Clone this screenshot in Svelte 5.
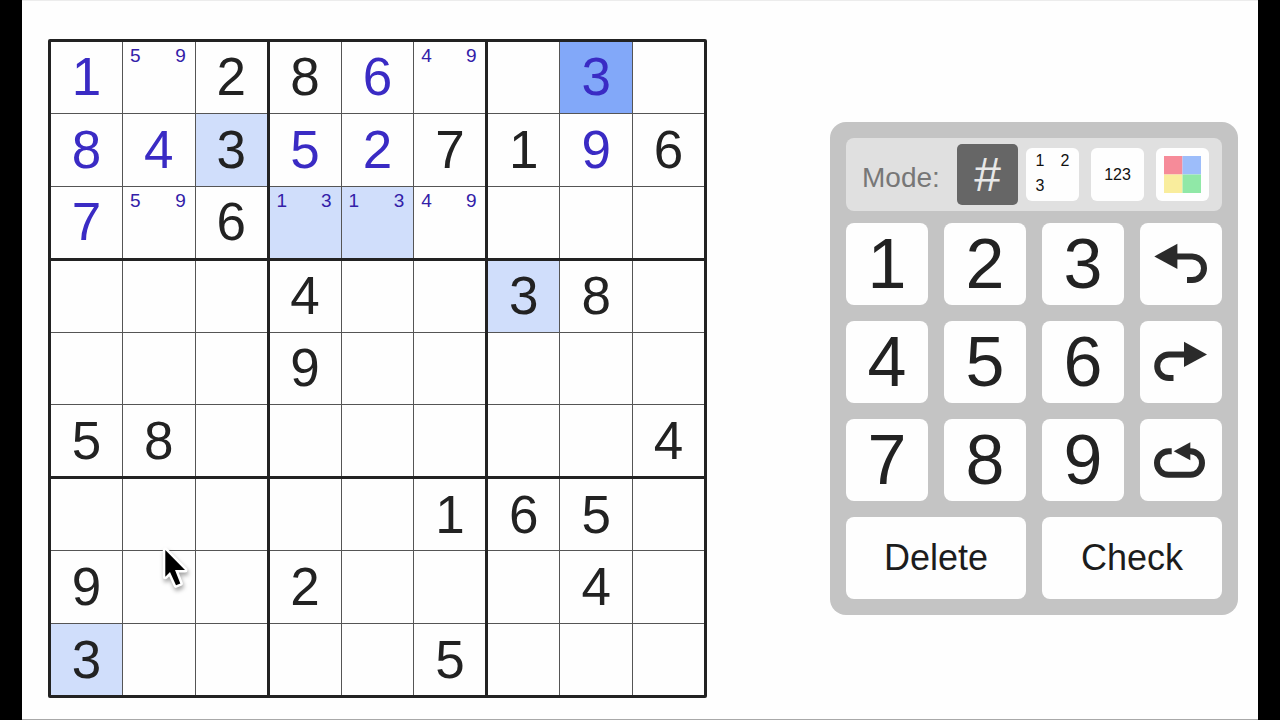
<script>
  // One string per row; "." marks an empty cell.
  const given = [
    '..28.....',
    '..3..71.6',
    '..6......',
    '...4..38.',
    '...9.....',
    '58......4',
    '.....165.',
    '9..2...4.',
    '3....5...'
  ];
  const entered = [
    '1...6..3.',
    '84.52..9.',
    '7........',
    '.........',
    '.........',
    '.........',
    '.........',
    '.........',
    '.........'
  ];
  const notes = {
    '0-1': [5, 9], '0-5': [4, 9],
    '2-1': [5, 9], '2-3': [1, 3], '2-4': [1, 3], '2-5': [4, 9]
  };
  const matching = ['1-2', '2-3', '2-4', '3-6', '8-0'];

  let selected = $state('0-7');
  let mode = $state('digit');

  // Cells grouped by 3x3 box so the heavy rules fall in the gaps between boxes.
  const boxes = Array.from({ length: 9 }, (_, b) =>
    Array.from({ length: 9 }, (_, i) => {
      const row = Math.floor(b / 3) * 3 + Math.floor(i / 3);
      const col = (b % 3) * 3 + (i % 3);
      const key = `${row}-${col}`;
      const g = given[row][col];
      const e = entered[row][col];
      return {
        key,
        value: g !== '.' ? g : e !== '.' ? e : '',
        mine: e !== '.',
        notes: notes[key] ?? [],
        match: matching.includes(key)
      };
    })
  );
</script>

<main>
  <section class="board" aria-label="Sudoku grid">
    {#each boxes as box}
      <div class="box">
        {#each box as cell (cell.key)}
          <button
            class="cell"
            class:mine={cell.mine}
            class:match={cell.match}
            class:selected={selected === cell.key}
            onclick={() => (selected = cell.key)}
          >
            {#if cell.notes.length}
              <span class="notes"><span>{cell.notes[0]}</span><span></span><span>{cell.notes[1]}</span></span>
            {:else}
              {cell.value}
            {/if}
          </button>
        {/each}
      </div>
    {/each}
  </section>

  <section class="panel" aria-label="Controls">
    <div class="modes">
      <span class="label">Mode:</span>
      <button class="mode hash" class:active={mode === 'digit'} onclick={() => (mode = 'digit')}>#</button>
      <button class="mode corner" class:active={mode === 'corner'} onclick={() => (mode = 'corner')}>
        <span>1</span><span>2</span><span>3</span>
      </button>
      <button class="mode" class:active={mode === 'centre'} onclick={() => (mode = 'centre')}>123</button>
      <button class="mode" class:active={mode === 'colour'} onclick={() => (mode = 'colour')} aria-label="Colour">
        <svg width="37" height="37" viewBox="0 0 37 37">
          <path fill="#f68b99" d="M0 0h18.5v18.5H0z" />
          <path fill="#9dbdfa" d="M18.5 0H37v18.5H18.5z" />
          <path fill="#f9ed9d" d="M0 18.5h18.5V37H0z" />
          <path fill="#90e8a7" d="M18.5 18.5H37V37H18.5z" />
        </svg>
      </button>
    </div>

    <div class="keys">
      <button class="key">1</button>
      <button class="key">2</button>
      <button class="key">3</button>
      <button class="key" aria-label="Undo">
        <svg class="icon" viewBox="0 0 82 82">
          <path class="line" d="M36 33.4H52.2a11.8 11.8 0 0 1 0 23.6H47" />
          <path class="head" d="M14.3 33.4L37.4 20.8V46z" />
        </svg>
      </button>
      <button class="key">4</button>
      <button class="key">5</button>
      <button class="key">6</button>
      <button class="key" aria-label="Redo">
        <svg class="icon" viewBox="0 0 82 82">
          <path class="line" d="M46 33.4H29a11.8 11.8 0 0 0 0 23.6H33.5" />
          <path class="head" d="M67 33.4L44 20.8V46z" />
        </svg>
      </button>
      <button class="key">7</button>
      <button class="key">8</button>
      <button class="key">9</button>
      <button class="key" aria-label="Restart">
        <svg class="icon" viewBox="0 0 82 82">
          <path class="line" d="M31.7 32.3H28.7a11.7 11.7 0 0 0 0 23.4H50.3a11.7 11.7 0 0 0 0-23.4H48" />
          <path class="head" d="M33.7 32.3L50.3 23.3V41.3z" />
        </svg>
      </button>
      <button class="key wide">Delete</button>
      <button class="key wide">Check</button>
    </div>
  </section>

  <svg class="pointer" width="32" height="48" viewBox="0 0 32 48" aria-hidden="true">
    <path
      d="M5.3 8V34.7L10 29.9L16 43.3L20.3 41.5L15 28H25z"
      fill="#000"
      stroke="#fff"
      stroke-width="5"
      stroke-linejoin="round"
      paint-order="stroke"
    />
  </svg>
</main>

<style>
  :global(body) {
    background: #000;
  }
  main {
    position: relative;
    box-sizing: border-box;
    min-height: 100vh;
    margin: 0 22px;
    padding: 38px 20px 20px 26px;
    border-top: 1px solid #ececec;
    border-bottom: 1px solid #a8a8a8;
    background: #fefefe;
    display: grid;
    grid-template-columns: 659fr 408fr;
    column-gap: 123px;
    align-items: center;
    align-content: start;
    font-family: "Liberation Sans", Arial, sans-serif;
    color: #222;
  }
  button {
    border: 0;
    margin: 0;
    padding: 0;
    font: inherit;
    color: inherit;
    background: #fefefe;
    cursor: pointer;
  }
  .board {
    box-sizing: border-box;
    aspect-ratio: 1;
    padding: 3px;
    border-radius: 2px;
    background: #222;
    display: grid;
    grid-template-columns: repeat(3, minmax(0, 1fr));
    grid-template-rows: repeat(3, minmax(0, 1fr));
    gap: 3px;
  }
  .box {
    background: #555;
    display: grid;
    grid-template-columns: minmax(0, 71fr) minmax(0, 72fr) minmax(0, 71fr);
    grid-template-rows: minmax(0, 71fr) minmax(0, 72fr) minmax(0, 71fr);
    gap: 1px;
  }
  .cell {
    display: flex;
    align-items: center;
    justify-content: center;
    font-size: 53px;
    line-height: 52px;
  }
  .mine {
    color: #3a2bc4;
  }
  .match {
    background: #d0defb;
  }
  .selected {
    background: #82a8f9;
  }
  .notes {
    flex: 1;
    align-self: flex-start;
    display: grid;
    grid-template-columns: repeat(3, 1fr);
    padding: 2px 3px 0 1px;
    font-size: 19px;
    line-height: 24px;
    text-align: center;
    color: #3320a8;
  }
  .panel {
    padding: 16px;
    border-radius: 16px;
    background: #c4c4c4;
    display: grid;
    gap: 12px;
  }
  .modes {
    display: flex;
    align-items: center;
    gap: 12px;
    height: 73px;
    padding: 0 13px 0 16px;
    border-radius: 8px;
    background: #e0e0e0;
  }
  .label {
    flex: 1;
    font-size: 28px;
    line-height: 32px;
    padding-top: 6px;
    color: #777;
  }
  .mode {
    flex: none;
    display: flex;
    align-items: center;
    justify-content: center;
    width: 53px;
    height: 53px;
    border-radius: 6px;
    font-size: 16px;
    line-height: 18px;
    color: #111;
  }
  .mode.active {
    width: 61px;
    height: 61px;
    margin: 0 -4px;
    border-radius: 5px;
    background: #666;
    color: #e8e8e8;
  }
  .hash {
    font-size: 48px;
    line-height: 48px;
  }
  .corner {
    display: grid;
    grid-template-columns: 25px 25px;
    grid-template-rows: 25px 25px;
    justify-items: center;
  }
  .keys {
    display: grid;
    grid-template-columns: repeat(4, minmax(0, 1fr));
    gap: 16px;
  }
  .key {
    height: 82px;
    border-radius: 8px;
    font-size: 70px;
    line-height: 82px;
    display: flex;
    align-items: center;
    justify-content: center;
  }
  .wide {
    grid-column: span 2;
    font-size: 36px;
    color: #1c1c1c;
  }
  .icon {
    width: 82px;
    height: 82px;
  }
  .line {
    fill: none;
    stroke: #2a2a2a;
    stroke-width: 6;
  }
  .head {
    fill: #2a2a2a;
  }
  .pointer {
    position: absolute;
    left: 138px;
    top: 541px;
    filter: drop-shadow(1px 3px 2px rgba(0, 0, 0, 0.35));
  }
</style>
